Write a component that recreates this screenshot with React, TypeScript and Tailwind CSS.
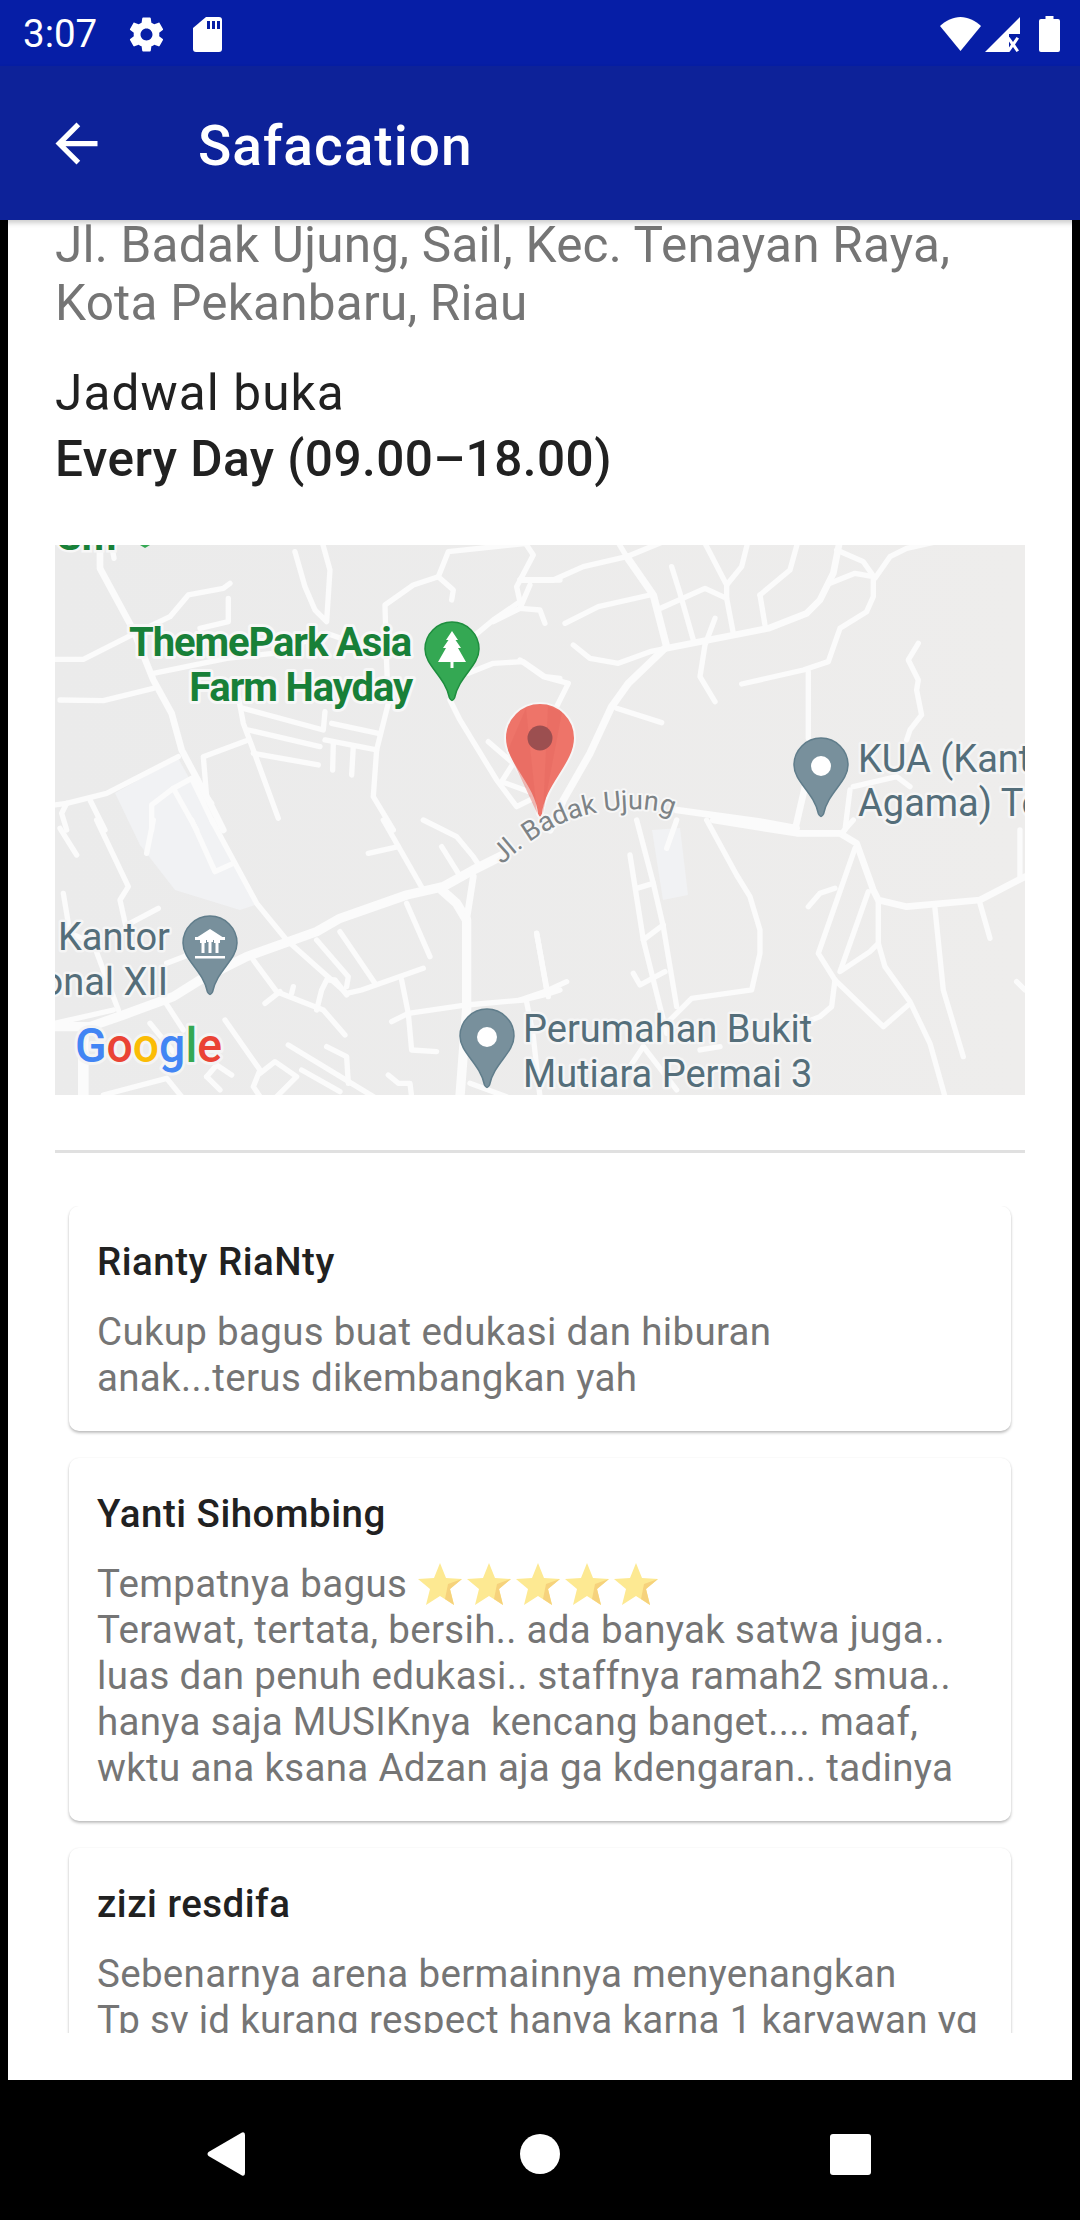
import React from "react";

type Road = [string, number];

const ROAD_TL: Road[] = [
  ["180,30 180,115 280,300 340,450 395,550 425,660 510,820 550,900", 20],
  ["215,45 222,85", 16],
  ["45,388 130,388 265,320 390,260 445,195 550,175 570,160", 16],
  ["565,205 565,275 480,295", 16],
  ["340,430 560,385 700,370 860,310 1030,370", 16],
  ["1235,210 1240,180 1195,140 1225,65 1460,40", 16],
  ["1195,140 1120,165 1035,225 1040,400 1045,520 1010,660 1000,800 1060,900", 16],
  ["60,510 190,512 340,475", 16],
  ["595,500 610,580 640,660 715,865", 16],
  ["610,535 850,600 855,545", 16],
  ["625,600 840,650", 16],
  ["640,670 835,705", 16],
  ["875,580 1015,610", 16],
  ["855,630 1010,660", 16],
  ["880,640 878,720", 16],
  ["940,650 935,735", 16],
  ["625,630 490,680 500,800 515,820", 16],
  ["765,65 795,170 825,240 860,275 870,120 845,30", 16],
  ["415,680 200,790 80,820 65,850 80,900", 16],
  ["45,825 80,820", 16],
  ["150,810 195,900", 16],
  ["335,900 335,825 400,775 470,900", 16],
  ["400,775 455,745 520,880", 16],
  ["1300,320 1360,270 1440,215 1430,170 1480,75 1450,30", 16],
  ["1440,150 1560,150", 16],
  ["1470,165 1440,235 1360,275", 16],
  ["1440,235 1500,240 1515,280", 16],
  ["1285,430 1360,400 1450,395 1515,440 1560,445", 16],
  ["1230,510 1260,570 1370,750 1430,830 1480,805", 16],
  ["1345,635 1420,700 1385,755 1480,790", 16],
];

const ROAD_TR: Road[] = [
  ["0,150 100,150 190,110 320,80 290,30", 16],
  ["320,80 430,35", 16],
  ["320,80 400,195 440,350 325,460 275,530 210,670 130,810 90,900", 22],
  ["135,280 235,230 390,195", 16],
  ["455,110 480,190 520,330", 16],
  ["410,240 555,175 620,205 640,310", 16],
  ["550,30 620,165 665,110 685,30", 16],
  ["620,205 620,165", 16],
  ["585,265 555,345 540,440 585,515", 16],
  ["440,355 745,295 860,250 900,210 940,130 960,30", 20],
  ["720,195 735,285", 16],
  ["720,195 810,120 835,30", 16],
  ["930,160 1005,130 1060,140 1060,200 1040,245 960,295 925,395 850,420 665,462", 16],
  ["950,60 1030,95 1065,145 1110,80 1160,55 1250,35", 16],
  ["865,425 865,625", 16],
  ["160,345 210,385 295,400 390,365 440,355", 16],
  ["0,390 70,440 145,460 110,530", 16],
  ["290,535 425,578", 16],
  ["1195,340 1165,390 1195,450 1190,480 1205,555 1170,600 1160,630", 16],
  ["470,840 720,875 830,895", 20],
  ["855,770 825,900", 20],
  ["1000,770 1130,740 1170,770", 16],
  ["990,780 975,900", 16],
];

const ROAD_BL: Road[] = [
  ["170,0 265,200 240,240 260,330", 16],
  ["45,620 150,620 250,585 400,530 480,480 620,410 830,335 900,295 1100,225 1210,200 1300,150 1400,100", 28],
  ["515,0 650,250 740,360 830,440 920,520 965,510 1150,445", 16],
  ["830,360 925,470 920,500", 16],
  ["900,335 1005,490", 16],
  ["1030,0 1150,210", 16],
  ["1100,250 1170,410", 16],
  ["985,100 1075,80", 16],
  ["1205,80 1255,160", 16],
  ["1150,0 1250,50 1300,110 1320,140", 16],
  ["1205,210 1250,250 1280,300 1280,570 1260,830", 28],
  ["1300,170 1280,300", 20],
  ["1085,480 1105,580 1115,690 1190,695", 16],
  ["1055,605 1105,580 1280,555 1450,540 1530,520 1560,510", 16],
  ["1490,340 1525,530", 16],
  ["1460,545 1480,650 1500,830", 16],
  ["70,220 90,340 160,370 235,570", 16],
  ["270,310 355,265", 16],
  ["455,0 525,155 580,130", 16],
  ["340,0 320,100", 16],
  ["60,25 110,105", 16],
  ["640,420 710,515 850,570 915,645", 16],
  ["675,550 720,515", 16],
  ["760,500 755,520", 16],
  ["830,570 845,510 860,480 885,480 920,525", 16],
  ["375,545 430,630", 16],
  ["330,610 420,720", 16],
  ["555,600 660,750 640,800 660,830", 16],
  ["660,760 705,725 770,770 710,830", 16],
  ["745,675 1000,830", 16],
  ["785,750 900,815", 16],
  ["860,680 920,710 925,790", 16],
  ["130,640 130,830", 32],
  ["190,825 380,775 425,830", 16],
  ["1045,765 1075,790 1110,790 1115,830", 16],
  ["1290,790 1400,830", 16],
  ["500,770 540,810", 16],
  ["500,770 530,735 575,765", 16],
  ["45,610 220,570", 16],
  ["380,430 445,405", 16],
];

const ROAD_BR: Road[] = [
  ["0,540 75,515 140,485", 16],
  ["50,340 80,510", 16],
  ["350,0 400,190 430,320 470,560", 16],
  ["330,105 370,360 410,520 440,640", 16],
  ["350,205 400,190", 16],
  ["370,360 430,315", 16],
  ["340,460 360,495 435,455", 16],
  ["560,0 650,165 690,230 720,330 720,400 695,510 515,535 450,600", 16],
  ["440,85 470,0", 16],
  ["540,690 600,680", 16],
  ["580,0 830,40 960,40 1010,70 1060,210 1075,240 1160,260 1380,240 1515,170", 20],
  ["965,40 1000,0", 16],
  ["1005,85 895,400 945,480 1090,620 1165,555", 16],
  ["1045,215 960,455 1050,395 1075,370 1075,240", 16],
  ["1075,370 1095,440 1170,545 1230,670 1275,830", 16],
  ["945,480 935,560 900,590 850,610", 16],
  ["865,260 900,220 945,205", 16],
  ["1245,265 1270,510 1330,710", 16],
  ["1380,250 1410,355", 16],
  ["1490,485 1515,510", 16],
  ["1500,30 1500,170", 16],
  ["370,680 470,810", 16],
  ["330,740 370,680", 16],
];

function Roads({ list, x, y }: { list: Road[]; x: number; y: number }) {
  return (
    <g transform={`translate(${x},${y}) scale(0.3333)`} fill="none" stroke="#fbfbfb" strokeLinecap="round" strokeLinejoin="round">
      {list.map(([points, width], i) => (
        <polyline key={i} points={points} strokeWidth={width} />
      ))}
    </g>
  );
}

const PIN = "M-27,0 A27,27 0 1 1 27,0 C27,17 7,27 2.5,49 Q0,54 -2.5,49 C-7,27 -27,17 -27,0 Z";

function GrayPin({ x, y, children }: { x: number; y: number; children?: React.ReactNode }) {
  return (
    <g transform={`translate(${x},${y})`}>
      <path d={PIN} fill="#78909c" stroke="#607d8b" strokeWidth="1.5" />
      {children ?? <circle r="10" cy="1" fill="#ffffff" />}
    </g>
  );
}

function MapLabel({ x, y, anchor, children }: { x: number; y: number; anchor?: "end"; children: string }) {
  return (
    <text x={x} y={y} textAnchor={anchor} fontSize="38" fill="#546e7a" stroke="#f5f5f5" strokeWidth="5" strokeLinejoin="round" paintOrder="stroke">
      {children}
    </text>
  );
}

function MapPicture() {
  return (
    <svg viewBox="0 0 970 550" className="block h-[550px] w-[970px]" fontFamily="Roboto, sans-serif">
      <defs>
        <linearGradient id="mapbg" x1="0" x2="1" y1="0" y2="0">
          <stop offset="0" stopColor="#ebebeb" />
          <stop offset="1" stopColor="#eeedec" />
        </linearGradient>
      </defs>
      <rect width="970" height="550" fill="url(#mapbg)" />
      <polygon points="60,248 123,213 157,274 200,360 185,365 120,345 85,300" fill="#f1f2f4" />
      <polygon points="597,285 625,283 633,350 608,355" fill="#f1f2f4" />
      <Roads list={ROAD_TL} x={-15} y={-15} />
      <Roads list={ROAD_TR} x={465} y={-15} />
      <Roads list={ROAD_BL} x={-15} y={275} />
      <Roads list={ROAD_BR} x={465} y={275} />

      <text x="2" y="5" fontSize="40" fontWeight="700" fill="#188038" stroke="#f7f7f7" strokeWidth="5" paintOrder="stroke">Sm</text>
      <path d="M85,0 L90,3 L95,0 Z" fill="#34a853" />

      <g fontSize="40" letterSpacing="-1.1" fontWeight="700" fill="#188038" stroke="#f7f7f7" strokeWidth="6" strokeLinejoin="round" paintOrder="stroke" textAnchor="end">
        <text x="356" y="111">ThemePark Asia</text>
        <text x="357" y="156">Farm Hayday</text>
      </g>
      <g transform="translate(397,104)">
        <path d={PIN} fill="#34a853" stroke="#1e8e3e" strokeWidth="1.5" />
        <polygon points="0,-18 6,-9 3.5,-9 9,-1 6,-1 14,13 -14,13 -6,-1 -9,-1 -3.5,-9 -6,-9" fill="#ffffff" />
        <rect x="-1.5" y="13" width="3" height="6" fill="#ffffff" />
      </g>

      <MapLabel x={803} y={227}>KUA (Kantor</MapLabel>
      <MapLabel x={803} y={271}>Agama) Tenayan</MapLabel>
      <GrayPin x={766} y={220} />

      <MapLabel x={115} y={405} anchor="end">Kantor</MapLabel>
      <MapLabel x={113} y={450} anchor="end">Regional XII</MapLabel>
      <GrayPin x={155} y={398}>
        <polygon points="0,-14 14,-5 -14,-5" fill="#ffffff" />
        <rect x="-15" y="-6" width="30" height="3" fill="#ffffff" />
        <rect x="-10" y="-3" width="6" height="3" fill="#ffffff" />
        <rect x="4" y="-3" width="6" height="3" fill="#ffffff" />
        <rect x="-8.5" y="-1" width="3" height="11" fill="#ffffff" />
        <rect x="5.5" y="-1" width="3" height="11" fill="#ffffff" />
        <rect x="-3" y="-3" width="6" height="2" fill="#ffffff" />
        <rect x="-1.5" y="-2" width="3" height="12" fill="#ffffff" />
        <rect x="-15" y="13" width="30" height="2.5" fill="#ffffff" />
      </GrayPin>

      <MapLabel x={468} y={497}>Perumahan Bukit</MapLabel>
      <MapLabel x={468} y={542}>Mutiara Permai 3</MapLabel>
      <GrayPin x={432} y={491} />

      <path id="streetcurve" d="M447,320 Q497,272 553,266 T622,276" fill="none" />
      <text fontSize="27" fill="#7d8386" stroke="#f7f7f7" strokeWidth="4" strokeLinejoin="round" paintOrder="stroke">
        <textPath href="#streetcurve">Jl. Badak Ujung</textPath>
      </text>

      <g transform="translate(485,193)">
        <path d="M-35,0 A35,35 0 1 1 35,0 C35,26 6,46 3,76 Q0,83 -3,76 C-6,46 -35,26 -35,0 Z" fill="#ee7469" stroke="#f6f6f6" strokeWidth="2" />
        <path d="M-3,75 L-32,12 L-14,-30 Z" fill="#e5685f" opacity="0.45" />
        <path d="M3,75 L8,-32 L22,-26 Z" fill="#e5685f" opacity="0.45" />
        <circle r="12.5" fill="#9c4f50" />
      </g>

      <text x="20" y="517" fontSize="49" fontWeight="500" textLength="147" lengthAdjust="spacingAndGlyphs" stroke="#f4f4f4" strokeWidth="6" strokeLinejoin="round" paintOrder="stroke">
        <tspan fill="#4285f4">G</tspan>
        <tspan fill="#ea4335">o</tspan>
        <tspan fill="#fbbc05">o</tspan>
        <tspan fill="#4285f4">g</tspan>
        <tspan fill="#34a853">l</tspan>
        <tspan fill="#ea4335">e</tspan>
      </text>
    </svg>
  );
}

function Star() {
  return (
    <svg viewBox="0 0 44 42" className="mr-[5px] inline-block h-[42px] w-[44px] align-[-8px]">
      <path d="M22,0 L28,15 L44,16 L32,26 L36,42 L22,33 L8,42 L12,26 L0,16 L16,15 Z" fill="#fde992" />
      <path d="M30,21 L44,16 L32,26 L36,42 L27,36 Z" fill="#f6d27c" />
    </svg>
  );
}

function Card({ name, lines, stars }: { name: string; lines: string[]; stars?: boolean }) {
  return (
    <div className="rounded-[10px] bg-white pt-[33px] pr-[29px] pb-[30px] pl-[28px] shadow-[0_2px_3px_rgba(0,0,0,0.25),0_0_2px_rgba(0,0,0,0.06)]">
      <div className="h-[46px] text-[38.5px] leading-[46px] font-medium tracking-[0.5px] text-[#212121]">{name}</div>
      <div className="mt-[24px] text-[38.5px] leading-[46px] tracking-[0.32px] whitespace-pre text-[#757575]">
        {lines.map((l, i) => (
          <div key={i} className="h-[46px]">
            {l}
            {stars && i === 0 ? (
              <>
                {" "}
                <span className="ml-[1px]" />
                <Star />
                <Star />
                <Star />
                <Star />
                <Star />
              </>
            ) : null}
          </div>
        ))}
      </div>
    </div>
  );
}

export default function App() {
  return (
    <div className="flex h-[2220px] w-[1080px] flex-col overflow-hidden bg-black font-['Roboto',sans-serif]">
      <div className="flex h-[66px] items-center bg-[#061ea6] pt-[2px] pr-[20px] pl-[23px] text-white">
        <span className="text-[38.5px] leading-none">3:07</span>
        <svg viewBox="0 0 24 24" className="ml-[29px] h-[41px] w-[41px]" fill="#fff">
          <path d="M19.43 12.98c.04-.32.07-.64.07-.98s-.03-.66-.07-.98l2.11-1.65c.19-.15.24-.42.12-.64l-2-3.46c-.12-.22-.39-.3-.61-.22l-2.49 1c-.52-.4-1.08-.73-1.69-.98l-.38-2.65C14.46 2.18 14.25 2 14 2h-4c-.25 0-.46.18-.49.42l-.38 2.65c-.61.25-1.17.59-1.69.98l-2.49-1c-.23-.09-.49 0-.61.22l-2 3.46c-.13.22-.07.49.12.64l2.11 1.65c-.04.32-.07.65-.07.98s.03.66.07.98l-2.11 1.65c-.19.15-.24.42-.12.64l2 3.46c.12.22.39.3.61.22l2.49-1c.52.4 1.08.73 1.69.98l.38 2.65c.03.24.24.42.49.42h4c.25 0 .46-.18.49-.42l.38-2.65c.61-.25 1.17-.59 1.69-.98l2.49 1c.23.09.49 0 .61-.22l2-3.46c.12-.22.07-.49-.12-.64l-2.11-1.65zM12 15.5c-1.93 0-3.5-1.57-3.5-3.5s1.57-3.5 3.5-3.5 3.5 1.57 3.5 3.5-1.57 3.5-3.5 3.5z" />
        </svg>
        <svg viewBox="0 0 29 35" className="ml-[26px] h-[35px] w-[29px]" fill="#fff">
          <path d="M13,0 H26 A3,3 0 0 1 29,3 V32 A3,3 0 0 1 26,35 H3 A3,3 0 0 1 0,32 V11 Z" />
          <path d="M14,4 h3 v8 h-3 z M19,4 h3 v8 h-3 z M24,4 h3 v8 h-3 z" fill="#061ea6" />
        </svg>
        <div className="flex-1" />
        <svg viewBox="0 0 41 34" className="h-[34px] w-[41px]" fill="#fff">
          <path d="M20.5,34 L41,9 C35,3.5 28,0 20.5,0 C13,0 6,3.5 0,9 Z" />
        </svg>
        <svg viewBox="0 0 35 35" className="ml-[4px] h-[35px] w-[35px]" fill="#fff">
          <path d="M35,0 V17 H24 V35 H0 Z" />
          <path d="M24.5,20 l3.5,5 3.5,-5 2.5,1.5 -4,6 4,6 -2.5,1.5 -3.5,-5 -3.5,5 -2.5,-1.5 4,-6 -4,-6 z" />
        </svg>
        <svg viewBox="0 0 21 36" className="ml-[19px] h-[36px] w-[21px]" fill="#fff">
          <path d="M6.5,0 H14.5 V3 H19 A2,2 0 0 1 21,5 V34 A2,2 0 0 1 19,36 H2 A2,2 0 0 1 0,34 V5 A2,2 0 0 1 2,3 H6.5 Z" />
        </svg>
      </div>

      <div className="relative z-10 flex h-[154px] items-center bg-[#0d2299] shadow-[0_3px_5px_rgba(0,0,0,0.2)]">
        <svg viewBox="0 0 24 24" className="ml-[45px] h-[63px] w-[63px]" fill="#fff">
          <path d="M20 11H7.83l5.59-5.59L12 4l-8 8 8 8 1.41-1.41L7.83 13H20v-2z" />
        </svg>
        <span className="ml-[90px] pt-[7px] text-[55px] leading-none font-medium tracking-[1px] text-white">Safacation</span>
      </div>

      <div className="mx-2 flex min-h-0 flex-1 flex-col overflow-hidden bg-white px-[47px]">
        <div className="-mt-[4px] text-[49.5px] leading-[58px] tracking-[0.22px] text-[#757575]">
          <div>Jl. Badak Ujung, Sail, Kec. Tenayan Raya,</div>
          <div>Kota Pekanbaru, Riau</div>
        </div>
        <div className="mt-[28px] text-[49.5px] leading-[66px] text-[#212121]">
          <div className="tracking-[1.1px]">Jadwal buka</div>
          <div className="font-medium tracking-[0.45px]">Every Day (09.00–18.00)</div>
        </div>
        <div className="mt-[53px] h-[550px] w-[970px] shrink-0">
          <MapPicture />
        </div>
        <div className="mt-[55px] h-[3px] shrink-0 bg-[#e0e0e0]" />
        <div className="-mx-[47px] mt-[53px] flex h-[827px] shrink-0 flex-col gap-[27px] overflow-hidden px-[61px] pb-0">
          <div className="shrink-0">
            <Card name="Rianty RiaNty" lines={["Cukup bagus buat edukasi dan hiburan", "anak...terus dikembangkan yah"]} />
          </div>
          <div className="shrink-0">
            <Card
              name="Yanti Sihombing"
              stars
              lines={[
                "Tempatnya bagus",
                "Terawat, tertata, bersih.. ada banyak satwa juga..",
                "luas dan penuh edukasi.. staffnya ramah2 smua..",
                "hanya saja MUSIKnya  kencang banget.... maaf,",
                "wktu ana ksana Adzan aja ga kdengaran.. tadinya",
              ]}
            />
          </div>
          <div className="shrink-0">
            <Card
              name="zizi resdifa"
              lines={["Sebenarnya arena bermainnya menyenangkan", "Tp sy id kurang respect hanya karna 1 karyawan yg"]}
            />
          </div>
        </div>
      </div>

      <div className="flex h-[140px] shrink-0 items-center bg-black pt-[8px]">
        <svg viewBox="0 0 38 44" className="ml-[207px] h-[44px] w-[38px]" fill="#fff">
          <path d="M35,0.5 Q38,-0.5 38,3 V41 Q38,44.5 35,43.5 L1.5,24 Q-0.5,22 1.5,20 Z" />
        </svg>
        <div className="ml-[275px] h-[40px] w-[40px] rounded-full bg-white" />
        <div className="ml-[270px] h-[41px] w-[41px] rounded-[3px] bg-white" />
      </div>
    </div>
  );
}
